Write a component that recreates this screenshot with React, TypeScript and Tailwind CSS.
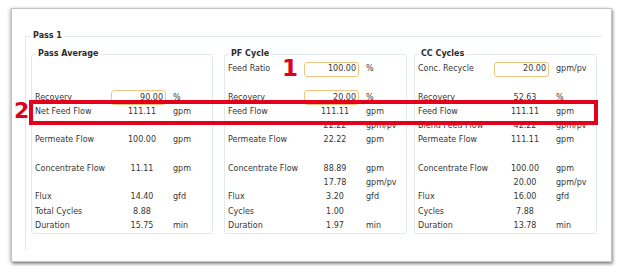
import React from "react";

type Row = {
  label?: string;
  value?: string;
  unit?: string;
  input?: boolean;
};

const passAverage: Row[] = [
  {},
  {},
  { label: "Recovery", value: "90.00", unit: "%", input: true },
  { label: "Net Feed Flow", value: "111.11", unit: "gpm" },
  {},
  { label: "Permeate Flow", value: "100.00", unit: "gpm" },
  {},
  { label: "Concentrate Flow", value: "11.11", unit: "gpm" },
  {},
  { label: "Flux", value: "14.40", unit: "gfd" },
  { label: "Total Cycles", value: "8.88" },
  { label: "Duration", value: "15.75", unit: "min" },
];

const pfCycle: Row[] = [
  { label: "Feed Ratio", value: "100.00", unit: "%", input: true },
  {},
  { label: "Recovery", value: "20.00", unit: "%", input: true },
  { label: "Feed Flow", value: "111.11", unit: "gpm" },
  { value: "22.22", unit: "gpm/pv" },
  { label: "Permeate Flow", value: "22.22", unit: "gpm" },
  {},
  { label: "Concentrate Flow", value: "88.89", unit: "gpm" },
  { value: "17.78", unit: "gpm/pv" },
  { label: "Flux", value: "3.20", unit: "gfd" },
  { label: "Cycles", value: "1.00" },
  { label: "Duration", value: "1.97", unit: "min" },
];

const ccCycles: Row[] = [
  { label: "Conc. Recycle", value: "20.00", unit: "gpm/pv", input: true },
  {},
  { label: "Recovery", value: "52.63", unit: "%" },
  { label: "Feed Flow", value: "111.11", unit: "gpm" },
  { label: "Blend Feed Flow", value: "42.22", unit: "gpm/pv" },
  { label: "Permeate Flow", value: "111.11", unit: "gpm" },
  {},
  { label: "Concentrate Flow", value: "100.00", unit: "gpm" },
  { value: "20.00", unit: "gpm/pv" },
  { label: "Flux", value: "16.00", unit: "gfd" },
  { label: "Cycles", value: "7.88" },
  { label: "Duration", value: "13.78", unit: "min" },
];

function GroupBox({ title, rows, className }: { title: string; rows: Row[]; className?: string }) {
  return (
    <div className={`relative h-[180px] rounded-[3px] border border-[#e2e8ee] pl-[3px] pt-[7px] ${className || ""}`}>
      <span className="absolute -top-[6px] left-[4px] bg-white px-[2px] text-[8px] font-bold leading-[10px] text-[#2b2b2b]">
        {title}
      </span>
      {rows.map((r, i) => (
        <div key={i} className="flex h-[14.25px] items-center leading-[14.25px]">
          <div className="w-[76px] whitespace-nowrap">{r.label}</div>
          <div className="flex w-[62px] items-center">
            {r.input ? (
              <div className="flex h-[15px] w-[55px] items-center justify-end rounded-[3px] border border-[#efc57f] bg-white pr-[2px]">
                {r.value}
              </div>
            ) : (
              <div className="w-full text-center">{r.value}</div>
            )}
          </div>
          <div className="whitespace-nowrap">{r.unit}</div>
        </div>
      ))}
    </div>
  );
}

export default function App() {
  return (
    <div
      className="relative h-[277px] w-[624px] overflow-hidden bg-white pl-[11px] pt-[8px] text-[8px] text-[#363636]"
      style={{ fontFamily: '"DejaVu Sans", Verdana, sans-serif' }}
    >
      {/* window */}
      <div className="h-[254px] w-[601px] border border-[#c2c2c2] bg-white shadow-[1px_2px_3px_rgba(0,0,0,0.45),-2px_0_3px_rgba(0,0,0,0.15)]">
        {/* Pass 1 fieldset */}
        <div className="relative ml-[13px] mt-[27px] h-[214px] w-[577px] border-l border-t border-[#e2e8ee] pl-[5px] pt-[17px]">
          <span className="absolute -top-[6px] left-[5px] bg-white px-[2px] text-[8px] font-bold leading-[10px] text-[#2b2b2b]">
            Pass 1
          </span>
          <div className="flex">
            <GroupBox title="Pass Average" rows={passAverage} className="w-[182px]" />
            <GroupBox title="PF Cycle" rows={pfCycle} className="ml-[11px] w-[183px]" />
            <GroupBox title="CC Cycles" rows={ccCycles} className="ml-[7px] w-[183px]" />
          </div>
        </div>
      </div>

      {/* annotations */}
      <div className="absolute left-[29px] top-[100px] h-[25px] w-[569px] border-4 border-[#e2001a]" />
      <span className="absolute left-[14px] top-[98px] text-[22px] font-bold leading-[26px] text-[#e2001a]">2</span>
      <span className="absolute left-[282px] top-[55px] text-[23px] font-bold leading-[27px] text-[#e2001a]">1</span>
    </div>
  );
}
